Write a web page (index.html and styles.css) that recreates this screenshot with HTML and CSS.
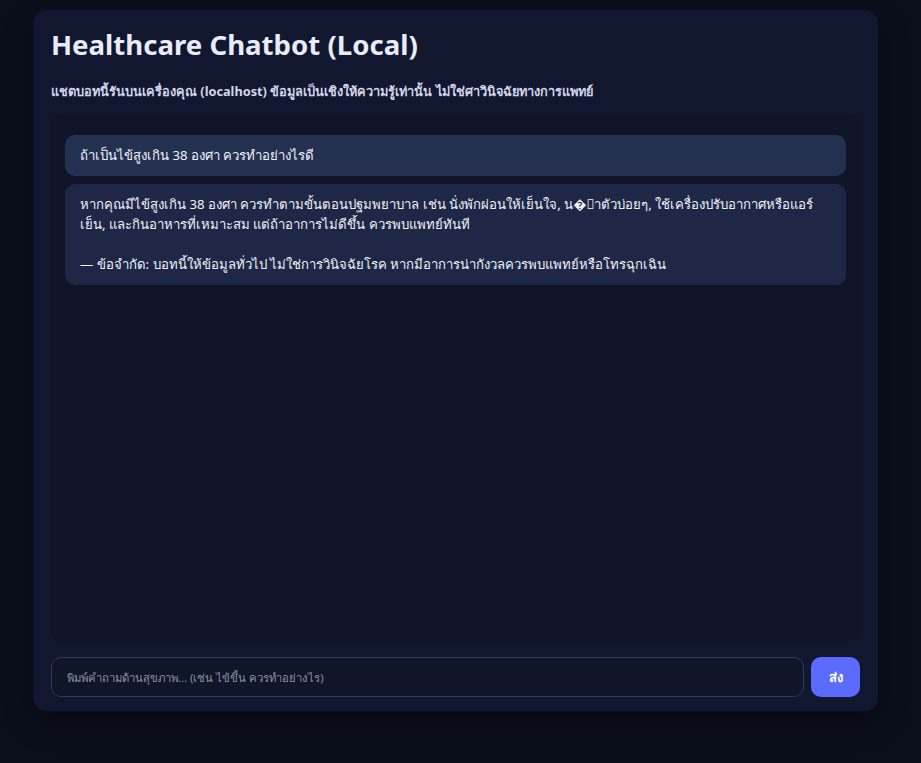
FILE: index.html
```html
<!DOCTYPE html>
<html lang="th">
<head>
<meta charset="utf-8">
<title>Healthcare Chatbot (Local)</title>
<link rel="stylesheet" href="styles.css">
</head>
<body>
<main class="card">
  <h1 class="title">Healthcare Chatbot (Local)</h1>
  <p class="subtitle">แชตบอทนี้รันบนเครื่องคุณ (localhost) ข้อมูลเป็นเชิงให้ความรู้เท่านั้น ไม่ใช่ศาวินิจฉัยทางการแพทย์</p>
  <section class="chat">
    <div class="msg msg-user">ถ้าเป็นไข้สูงเกิน 38 องศา ควรทำอย่างไรดี</div>
    <div class="msg msg-bot">หากคุณมีไข้สูงเกิน 38 องศา ควรทำตามขั้นตอนปฐมพยาบาล เช่น นั่งพักผ่อนให้เย็นใจ, น�้าตัวบ่อยๆ, ใช้เครื่องปรับอากาศหรือแอร์เย็น, และกินอาหารที่เหมาะสม แต่ถ้าอาการไม่ดีขึ้น ควรพบแพทย์ทันที

— ข้อจำกัด: บอทนี้ให้ข้อมูลทั่วไป ไม่ใช่การวินิจฉัยโรค หากมีอาการน่ากังวลควรพบแพทย์หรือโทรฉุกเฉิน</div>
  </section>
  <form class="composer">
    <input class="input" type="text" placeholder="พิมพ์คำถามด้านสุขภาพ... (เช่น ไข้ขึ้น ควรทำอย่างไร)">
    <button class="send" type="button">ส่ง</button>
  </form>
</main>
</body>
</html>
```

FILE: styles.css
```css
* { box-sizing: border-box; }
html, body { margin: 0; padding: 0; }
body {
  background: #0b0f1b;
  font-family: "Noto Sans", "Open Sans", sans-serif;
  color: #e6e9f5;
  min-height: 763px;
  padding: 10px 0 0 33px;
}
.card {
  width: 845px;
  height: 701px;
  background: #121730;
  border-radius: 14px;
  padding: 16px 18px 14px;
  display: flex;
  flex-direction: column;
  box-shadow: 0 10px 30px rgba(0,0,0,0.35);
}
.title {
  margin: 0;
  font-size: 27.6px;
  font-weight: 700;
  line-height: 36px;
  color: #e9ecf8;
}
.subtitle {
  margin: 19px 0 0;
  font-size: 12.75px;
  font-weight: 700;
  line-height: 20px;
  color: #d2d6e8;
}
.chat {
  margin-top: 13px;
  flex: 1;
  background: #0f1428;
  border-radius: 12px;
  padding: 21px 14px 14px;
  display: flex;
  flex-direction: column;
  gap: 8px;
}
.msg {
  border-radius: 10px;
  padding: 10px 15px 11px;
  font-size: 13.2px;
  line-height: 20px;
  white-space: pre-wrap;
  color: #f0f2fa;
}
.msg-user { background: #243050; }
.msg-bot { background: #1e2745; }
.composer {
  margin: 15px 0 0;
  display: flex;
  gap: 7px;
  height: 40px;
}
.input {
  flex: 1;
  height: 40px;
  background: #10152a;
  border: 1px solid #2e3862;
  border-radius: 10px;
  padding: 0 15px;
  font-family: inherit;
  font-size: 11.3px;
  color: #e6e9f5;
  outline: none;
}
.input::placeholder { color: #8b90a6; }
.send {
  width: 49px;
  height: 40px;
  border: 0;
  border-radius: 10px;
  background: #5b6bff;
  color: #ffffff;
  font-family: inherit;
  font-size: 13px;
  font-weight: 700;
}
```
